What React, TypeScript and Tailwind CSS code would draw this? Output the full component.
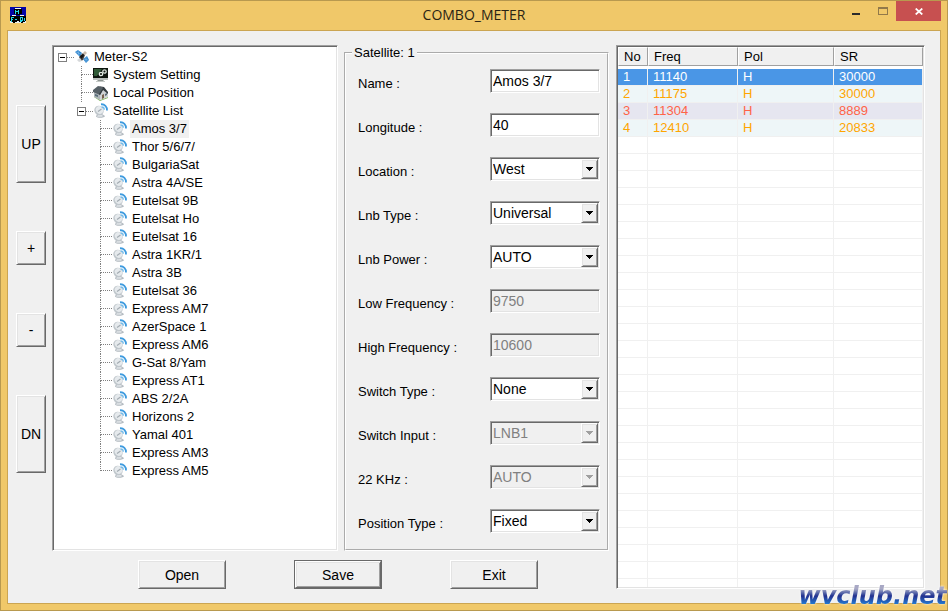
import React, { useState } from "react";

type Transponder = {
  freq: string;
  pol: string;
  sr: string;
  rowClass: string;
};

type Field = {
  id: string;
  label: string;
  value: string;
  kind: "text" | "select";
  disabled?: boolean;
};

const SATELLITES = [
  "Amos 3/7",
  "Thor 5/6/7/",
  "BulgariaSat",
  "Astra 4A/SE",
  "Eutelsat 9B",
  "Eutelsat Ho",
  "Eutelsat 16",
  "Astra 1KR/1",
  "Astra 3B",
  "Eutelsat 36",
  "Express AM7",
  "AzerSpace 1",
  "Express AM6",
  "G-Sat 8/Yam",
  "Express AT1",
  "ABS 2/2A",
  "Horizons 2",
  "Yamal 401",
  "Express AM3",
  "Express AM5",
];

const FIELDS: Field[] = [
  { id: "name", label: "Name :", value: "Amos 3/7", kind: "text" },
  { id: "longitude", label: "Longitude :", value: "40", kind: "text" },
  { id: "location", label: "Location :", value: "West", kind: "select" },
  { id: "lnb-type", label: "Lnb Type :", value: "Universal", kind: "select" },
  { id: "lnb-power", label: "Lnb Power :", value: "AUTO", kind: "select" },
  { id: "low-freq", label: "Low Frequency :", value: "9750", kind: "text", disabled: true },
  { id: "high-freq", label: "High Frequency :", value: "10600", kind: "text", disabled: true },
  { id: "switch-type", label: "Switch Type :", value: "None", kind: "select" },
  { id: "switch-input", label: "Switch Input :", value: "LNB1", kind: "select", disabled: true },
  { id: "khz", label: "22 KHz :", value: "AUTO", kind: "select", disabled: true },
  { id: "position", label: "Position Type :", value: "Fixed", kind: "select" },
];

const TRANSPONDERS: Transponder[] = [
  { freq: "11140", pol: "H", sr: "30000", rowClass: "bg-[#4a96e6] text-white" },
  { freq: "11175", pol: "H", sr: "30000", rowClass: "bg-[#eef6f8] text-[#ffa500]" },
  { freq: "11304", pol: "H", sr: "8889", rowClass: "bg-[#e6e6f0] text-[#ff6347]" },
  { freq: "12410", pol: "H", sr: "20833", rowClass: "bg-[#eef6f8] text-[#ffa500]" },
];

const BLANK_ROWS = 26;

// CLASSIC WINDOWS 3D EDGES
const SUNKEN =
  "border border-t-[#a0a0a0] border-l-[#a0a0a0] border-b-white border-r-white shadow-[inset_1px_1px_0_#696969,inset_-1px_-1px_0_#e3e3e3]";
const RAISED =
  "border border-t-white border-l-white border-b-[#696969] border-r-[#696969] bg-[#f0f0f0] shadow-[inset_1px_1px_0_#e3e3e3,inset_-1px_-1px_0_#a0a0a0]";

function AppIcon() {
  return (
    <svg className="h-4 w-4" viewBox="0 0 16 16" shapeRendering="crispEdges">
      <rect width="16" height="16" fill="#0505a8" />
      <path d="M0 14h16v2H0z" fill="#e8eef0" />
      <path d="M4 2l4-1 4 1v5l-4 1-4-1z" fill="#000" />
      <path d="M0 9l4-1 4 1v5l-4 2-4-2zM8 9l4-1 4 1v5l-4 2-4-2z" fill="#000" />
      <path d="M5 1h6v1H5zM2 8h4v1H2zM10 8h4v1h-4z" fill="#f2f2f2" />
      <path d="M5 3h1v1h2V3h1v4H8V5H6v2H5z" fill="#23d5e8" />
      <path d="M1 10h3v1H2v1h1v1H2v2H1zM10 10h3v4h-1v1h-2zM11 11v2h1v-2z" fill="#23d5e8" />
      <path d="M5 12h2v1H5zM14 11h1v3h-1z" fill="#23d5e8" />
    </svg>
  );
}

function MeterIcon() {
  return (
    <svg className="h-4 w-4 shrink-0" viewBox="0 0 16 16">
      <path d="M1 3l3-2 4 3-2 4z" fill="#2f86cf" />
      <path d="M2 3l5 2M4 1.500L5 7" stroke="#9cc9ec" strokeWidth=".5" />
      <path d="M9 10l4-3 2 4-3 3z" fill="#2f86cf" />
      <path d="M10 10l4 1M12 8l0 5" stroke="#9cc9ec" strokeWidth=".5" />
      <path d="M5 8l4-4 2 2-2 5-2 1z" fill="#4a4442" />
      <path d="M6 7l3-2 1 2-3 3z" fill="#161616" />
      <path d="M3 11l3-2 2 3-3 1z" fill="#d5d8da" />
      <path d="M9 4l2-2 2 2-2 2z" fill="#c9b9aa" />
    </svg>
  );
}

function MonitorIcon() {
  return (
    <svg className="h-4 w-4 shrink-0" viewBox="0 0 16 16">
      <path d="M0 1h15v12H0z" fill="#b9bfbb" />
      <path d="M0 1h15v10H0z" fill="#0d150e" />
      <path d="M1 2h8L4 9H1z" fill="#2f5a36" />
      <circle cx="8" cy="7" r="1.700" fill="none" stroke="#e3ebe4" strokeWidth="1.300" />
      <circle cx="11.500" cy="4.500" r="1.700" fill="none" stroke="#d4ded6" strokeWidth="1.300" />
      <path d="M5 13h5l1 1H4z" fill="#8e9592" />
      <path d="M3 14h9v1H3z" fill="#c4c9c6" />
    </svg>
  );
}

function HouseIcon() {
  return (
    <svg className="h-4 w-4 shrink-0" viewBox="0 0 16 16">
      <path d="M1 11l6 4 8-3v1l-8 3-6-4z" fill="#7fb35a" />
      <path d="M1 6l6 3v6l-6-3z" fill="#aeb5b9" />
      <path d="M7 9l3-4 5 3v4l-8 3z" fill="#cfd3d6" />
      <path d="M0 5l5-4 6 2-4 7-7-3z" fill="#566066" />
      <path d="M5 1l6 1 4 5v2l-5-4-3 5-1-1 4-6z" fill="#333b40" />
      <path d="M9 10l2-1v4l-2 1z" fill="#77604c" />
      <path d="M12 9l2-1v2l-2 1zM2 9l3 1v2l-3-1z" fill="#596d79" />
    </svg>
  );
}

function DishIcon() {
  return (
    <svg className="h-4 w-4 shrink-0" viewBox="0 0 16 16" fill="none">
      <path d="M4 11h5l3 2c0 2-8 2.500-9 .500z" fill="#b3bac0" />
      <path d="M5 12h4l1 1c0 1-5 1-6 .500z" fill="#dfe3e6" />
      <ellipse cx="6" cy="7.500" rx="4.500" ry="5" transform="rotate(-40 6 7.500)" fill="#c0c7cc" />
      <ellipse cx="6.500" cy="7" rx="3.500" ry="4" transform="rotate(-40 6.500 7)" fill="#e6eaed" />
      <path d="M5 8.500L8.500 6" stroke="#a4acb2" strokeWidth="1.200" />
      <path d="M8.500 4c1.500 0 2.800 1.200 2.800 2.800" stroke="#74bbe9" strokeWidth="1.300" />
      <path d="M8 1.300c3.500-.300 6.300 2.300 6 6.200" stroke="#3d9ade" strokeWidth="1.800" />
    </svg>
  );
}

type ExpanderProps = {
  open: boolean;
  label: string;
  onToggle: () => void;
};

function Expander({ open, label, onToggle }: ExpanderProps) {
  return (
    <button
      type="button"
      aria-label={label}
      onClick={onToggle}
      className="flex h-[9px] w-[9px] shrink-0 items-center justify-center border border-[#808080] bg-white"
    >
      <svg className="h-[5px] w-[5px]" viewBox="0 0 5 5" shapeRendering="crispEdges">
        <path d={open ? "M0 2h5v1H0z" : "M0 2h5v1H0zM2 0h1v5H2z"} fill="#000" />
      </svg>
    </button>
  );
}

// DOTTED BRANCH IN FRONT OF A TREE ITEM
function Branch({ last }: { last?: boolean }) {
  return (
    <span className="flex h-full w-3 shrink-0 flex-col">
      <span className="h-[9px] border-b border-l border-dotted border-[#808080]" />
      {!last && <span className="h-[9px] border-l border-dotted border-[#808080]" />}
    </span>
  );
}

function SatelliteTree() {
  const [rootOpen, setRootOpen] = useState(true);
  const [listOpen, setListOpen] = useState(true);
  const [selected, setSelected] = useState(SATELLITES[0]);

  return (
    <div className={`${SUNKEN} min-w-0 bg-white pt-0.5 pl-[5px] leading-[18px]`}>
      <div className="flex h-[18px] items-center">
        <Expander open={rootOpen} label="Meter-S2" onToggle={() => setRootOpen(!rootOpen)} />
        <span className="w-[7px] border-t border-dotted border-[#808080]" />
        <MeterIcon />
        <span className="ml-1">Meter-S2</span>
      </div>
      {rootOpen && (
        <ul className="pl-[23px]">
          <li className="flex h-[18px] items-center">
            <Branch />
            <MonitorIcon />
            <span className="ml-1">System Setting</span>
          </li>
          <li className="flex h-[18px] items-center">
            <Branch />
            <HouseIcon />
            <span className="ml-1">Local Position</span>
          </li>
          <li>
            <div className="-ml-1 flex h-[18px] items-center">
              <Expander open={listOpen} label="Satellite List" onToggle={() => setListOpen(!listOpen)} />
              <span className="w-[7px] border-t border-dotted border-[#808080]" />
              <DishIcon />
              <span className="ml-1">Satellite List</span>
            </div>
            {listOpen && (
              <ul className="pl-[19px]">
                {SATELLITES.map((name, i) => (
                  <li key={name} className="flex h-[18px] items-center">
                    <Branch last={i === SATELLITES.length - 1} />
                    <DishIcon />
                    <button
                      type="button"
                      onClick={() => setSelected(name)}
                      className={`ml-0.5 px-0.5 ${name === selected ? "bg-[#f0f0f0]" : ""}`}
                    >
                      {name}
                    </button>
                  </li>
                ))}
              </ul>
            )}
          </li>
        </ul>
      )}
    </div>
  );
}

function FormField({ field }: { field: Field }) {
  const tone = field.disabled ? "bg-[#f0f0f0] text-[#808080]" : "bg-white text-black";

  return (
    <div className="flex h-6 items-center justify-between">
      <label htmlFor={field.id} className="pt-1.5">
        {field.label}
      </label>
      {field.kind === "text" ? (
        <input
          id={field.id}
          defaultValue={field.value}
          disabled={field.disabled}
          className={`${SUNKEN} ${tone} h-6 w-[110px] px-0.5 text-sm`}
        />
      ) : (
        <div className="relative w-[110px]">
          <select
            id={field.id}
            disabled={field.disabled}
            className={`${SUNKEN} ${tone} block h-6 w-full appearance-none px-0.5 text-sm opacity-100`}
          >
            <option>{field.value}</option>
          </select>
          <span
            className={`${RAISED} pointer-events-none absolute top-0.5 right-0.5 bottom-0.5 flex w-[17px] items-center justify-center`}
          >
            <svg className="h-1 w-[7px]" viewBox="0 0 7 4" shapeRendering="crispEdges">
              <path d="M0 0h7v1H6v1H5v1H4v1H3V3H2V2H1V1H0z" fill={field.disabled ? "#a0a0a0" : "#000"} />
            </svg>
          </span>
        </div>
      )}
    </div>
  );
}

function TransponderList() {
  const cell = "border-r border-b border-[#f0f0f0] p-0 pl-[5px] leading-4";
  const head =
    "h-[19px] border border-t-white border-l-white border-r-[#a0a0a0] border-b-[#a0a0a0] bg-[#f0f0f0] p-0 pl-[5px] text-left font-normal";

  return (
    <div className={`${SUNKEN} min-w-0 overflow-hidden bg-white p-px`}>
      <table className="w-full table-fixed border-separate border-spacing-0">
        <colgroup>
          <col className="w-[30px]" />
          <col className="w-[90px]" />
          <col className="w-[96px]" />
          <col />
        </colgroup>
        <thead className="leading-[17px]">
          <tr>
            <th className={head}>No</th>
            <th className={head}>Freq</th>
            <th className={head}>Pol</th>
            <th className={head}>SR</th>
          </tr>
        </thead>
        <tbody>
          <tr className="h-[3px]">
            <td colSpan={4} className="p-0" />
          </tr>
          {TRANSPONDERS.map((row, i) => (
            <tr key={row.freq} className={`h-[17px] ${row.rowClass}`}>
              <td className={cell}>{i + 1}</td>
              <td className={cell}>{row.freq}</td>
              <td className={cell}>{row.pol}</td>
              <td className={cell}>{row.sr}</td>
            </tr>
          ))}
          {Array.from({ length: BLANK_ROWS }, (_, i) => (
            <tr key={i} className="h-[17px]">
              <td className={cell} />
              <td className={cell} />
              <td className={cell} />
              <td className={cell} />
            </tr>
          ))}
          <tr className="h-2">
            <td className="border-r border-[#f0f0f0] p-0" />
            <td className="border-r border-[#f0f0f0] p-0" />
            <td className="border-r border-[#f0f0f0] p-0" />
            <td className="p-0" />
          </tr>
        </tbody>
      </table>
    </div>
  );
}

function TitleBar() {
  return (
    <header className="grid h-[29px] grid-cols-[1fr_auto_1fr]">
      <div className="pt-1.5 pl-[9px]">
        <AppIcon />
      </div>
      <h1 className="pt-0.5 font-['Open_Sans','Noto_Sans',sans-serif] text-sm leading-6 text-[#2b2414]">
        COMBO_METER
      </h1>
      <div className="flex items-start justify-end pr-1.5">
        <button type="button" aria-label="Minimize" className="flex h-5 w-[27px] items-center justify-center">
          <svg className="h-5 w-2" viewBox="0 0 8 20" shapeRendering="crispEdges">
            <path d="M0 12h8v2H0z" fill="#2b2b2b" />
          </svg>
        </button>
        <button type="button" aria-label="Maximize" className="flex h-5 w-[27px] items-center justify-center">
          <svg className="h-5 w-2.5" viewBox="0 0 10 20" shapeRendering="crispEdges">
            <path d="M0 6h10v8H0zM1 8v5h8V8z" fillRule="evenodd" fill="#91794a" />
          </svg>
        </button>
        <button
          type="button"
          aria-label="Close"
          className="flex h-5 w-[45px] items-center justify-center bg-[#c75050]"
        >
          <svg className="h-[7px] w-2" viewBox="0 0 8 7">
            <path d="M.700.500l6.600 6M7.300.500l-6.600 6" stroke="#fff" strokeWidth="1.700" />
          </svg>
        </button>
      </div>
    </header>
  );
}

export default function App() {
  return (
    <div className="relative flex min-h-screen flex-col border border-[#b8994f] bg-[#f0c869] font-['Liberation_Sans',Arial,sans-serif] text-[13px] text-black">
      <TitleBar />

      <main className="mx-1.5 mb-1.5 flex grow border border-[#cba552] bg-[#f0f0f0] py-3.5 pr-[15px] pl-2">
        <nav className="mr-1.5 flex w-[30px] shrink-0 flex-col gap-12 pt-[60px] text-sm">
          <button type="button" className={`${RAISED} h-[78px]`}>UP</button>
          <button type="button" className={`${RAISED} h-[34px]`}>+</button>
          <button type="button" className={`${RAISED} h-[34px]`}>-</button>
          <button type="button" className={`${RAISED} h-[78px]`}>DN</button>
        </nav>

        <div className="grid min-w-0 grow grid-cols-[minmax(0,557fr)_minmax(0,309fr)] gap-[7px]">
          <div className="flex flex-col">
            <div className="grid grow grid-cols-[minmax(0,286fr)_minmax(0,265fr)] gap-1.5">
              <SatelliteTree />
              <fieldset className="min-w-0 border-2 border-white pr-[7px] pl-3 [border-style:groove]">
                <legend className="-ml-1.5 px-0.5 leading-4">Satellite: 1</legend>
                <div className="flex flex-col gap-5 pt-2">
                  {FIELDS.map((field) => (
                    <FormField key={field.id} field={field} />
                  ))}
                </div>
              </fieldset>
            </div>
            <div className="mt-[9px] flex justify-center gap-[68px] pl-[15px] text-sm">
              <button type="button" className={`${RAISED} h-[29px] w-[88px]`}>Open</button>
              <div className="border border-[#696969]">
                <button type="button" className={`${RAISED} h-[27px] w-[86px]`}>Save</button>
              </div>
              <button type="button" className={`${RAISED} h-[29px] w-[88px]`}>Exit</button>
            </div>
          </div>

          <TransponderList />
        </div>
      </main>

      <span className="pointer-events-none absolute right-0 bottom-0 bg-gradient-to-b from-[#a8a8c4] from-25% via-[#23308f] via-50% to-[#1f8ae0] to-85% bg-clip-text font-['DejaVu_Sans',sans-serif] text-2xl leading-7 font-bold text-transparent italic drop-shadow-[0_0_1px_white]">
        wvclub.net
      </span>
    </div>
  );
}
